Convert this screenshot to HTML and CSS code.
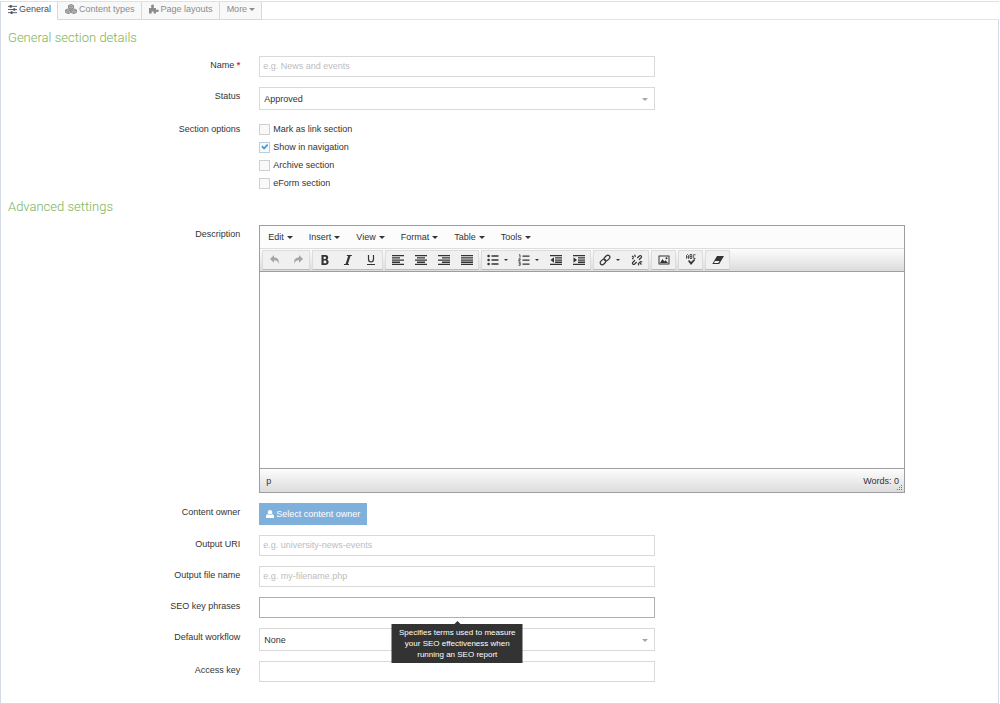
FILE: index.html
```html
<!DOCTYPE html>
<html lang="en">
  <head>
    <meta charset="utf-8">
    <title>General section details</title>
    <link rel="stylesheet" href="styles.css">
  </head>
  <body>
    <nav class="tabs">
      <a class="tab tab-active" href="#general">
        <svg class="icon" viewBox="0 0 10 10" width="9" height="9"><path d="M0 1.5h10M0 5h10M0 8.5h10" stroke="currentColor" stroke-width="1"/><path d="M3 0v3M7 3.5v3M4 7v3" stroke="currentColor" stroke-width="2"/></svg>
        General
      </a>
      <a class="tab" href="#types">
        <svg class="icon" viewBox="0 0 12 10" width="12" height="10"><path d="M6 .5L8.5 1.5V4L6 5.2 3.500 4V1.500zM3.200 4.800L5.800 6v2.500L3.200 9.600.600 8.500V6zM8.800 4.800L11.400 6v2.500L8.800 9.600 6.200 8.500V6z" fill="#bbb" stroke="currentColor" stroke-width="1"/><path d="M3.500 1.500L6 2.600l2.500-1.100M.6 6l2.600 1.100L5.800 6M6.200 6l2.600 1.100L11.400 6M6 2.600v2.600M3.200 7.100v2.500M8.800 7.100v2.500" fill="none" stroke="currentColor" stroke-width=".8"/></svg>
        Content types
      </a>
      <a class="tab" href="#layouts">
        <svg class="icon" viewBox="0 0 10 10" width="10" height="10"><path d="M0 4h2.600C1.500 2.500 2 .6 3.500.6S5.500 2.500 4.500 4H7v2c1-.9 2.800-.6 2.800.8S8 8.500 7 7.600V9.500H4.600V7.600H2.700v1.900H0z" fill="currentColor"/></svg>
        Page layouts
      </a>
      <a class="tab" href="#more">More <span class="caret"></span></a>
    </nav>

    <form class="panel">
      <h2 class="heading">General section details</h2>
      <div class="row">
        <label class="label" for="name">Name <span class="required">*</span></label>
        <input class="input" id="name" type="text" placeholder="e.g. News and events">
      </div>
      <div class="row">
        <label class="label" for="status">Status</label>
        <div class="select">
          <select id="status"><option>Approved</option></select>
        </div>
      </div>
      <div class="row" role="group" aria-labelledby="options">
        <span class="label" id="options">Section options</span>
        <div class="options">
          <label class="option"><input type="checkbox">Mark as link section</label>
          <label class="option"><input type="checkbox" checked>Show in navigation</label>
          <label class="option"><input type="checkbox">Archive section</label>
          <label class="option"><input type="checkbox">eForm section</label>
        </div>
      </div>

      <h2 class="heading heading-advanced">Advanced settings</h2>
      <div class="row">
        <label class="label" for="description">Description</label>
        <div class="editor">
          <div class="menubar">
            <button class="menu" type="button">Edit <span class="caret"></span></button>
            <button class="menu" type="button">Insert <span class="caret"></span></button>
            <button class="menu" type="button">View <span class="caret"></span></button>
            <button class="menu" type="button">Format <span class="caret"></span></button>
            <button class="menu" type="button">Table <span class="caret"></span></button>
            <button class="menu" type="button">Tools <span class="caret"></span></button>
          </div>
          <div class="toolbar">
            <div class="group">
              <button class="tool" type="button" aria-label="Undo" disabled><svg viewBox="0 0 12 12"><path d="M5 1v2.500c4 0 5.500 2.500 4.500 6.500C9.300 7.500 8 6.200 5 6.200V8.700L1 4.900z"/></svg></button>
              <button class="tool" type="button" aria-label="Redo" disabled><svg viewBox="0 0 12 12"><path d="M7 1v2.500C3 3.500 1.500 6 2.500 10 2.700 7.500 4 6.200 7 6.200V8.700l4-3.800z"/></svg></button>
            </div>
            <div class="group">
              <button class="tool" type="button" aria-label="Bold"><svg viewBox="0 0 12 12"><path fill-rule="evenodd" d="M2.500 1h4c3.300 0 3.400 3.800 1.500 4.600 2.500.8 2.200 5.400-1.500 5.400h-4zM4.600 2.700v2.200h1.500c1.400 0 1.400-2.200 0-2.200zm0 3.800v2.800h1.700c1.600 0 1.600-2.800 0-2.800z"/></svg></button>
              <button class="tool" type="button" aria-label="Italic"><svg viewBox="0 0 12 12"><path d="M5 1h5l-.3 1H8.500L5.900 10h1.200l-.3 1h-5l.3-1h1.500L6.200 2H4.700z"/></svg></button>
              <button class="tool" type="button" aria-label="Underline"><svg viewBox="0 0 12 12"><path class="line" d="M3.500 1v4c0 4 5 4 5 0V1M2 10.500h8"/></svg></button>
            </div>
            <div class="group">
              <button class="tool" type="button" aria-label="Align left"><svg viewBox="0 0 12 12"><path d="M0 1h12v1.300H0zM0 3.200h8v1.300H0zM0 5.400h12v1.300H0zM0 7.600h8v1.300H0zM0 9.800h12v1.300H0z"/></svg></button>
              <button class="tool" type="button" aria-label="Align center"><svg viewBox="0 0 12 12"><path d="M0 1h12v1.300H0zM2 3.200h8v1.300H2zM0 5.400h12v1.300H0zM2 7.600h8v1.300H2zM0 9.800h12v1.300H0z"/></svg></button>
              <button class="tool" type="button" aria-label="Align right"><svg viewBox="0 0 12 12"><path d="M0 1h12v1.300H0zM4 3.200h8v1.300H4zM0 5.400h12v1.300H0zM4 7.600h8v1.300H4zM0 9.800h12v1.300H0z"/></svg></button>
              <button class="tool" type="button" aria-label="Justify"><svg viewBox="0 0 12 12"><path d="M0 1h12v1.300H0zM0 3.200h12v1.300H0zM0 5.400h12v1.300H0zM0 7.600h12v1.300H0zM0 9.800h12v1.300H0z"/></svg></button>
            </div>
            <div class="group">
              <button class="tool tool-split" type="button" aria-label="Bullet list"><svg viewBox="0 0 12 12"><path d="M4.500 1.200h7v1.500h-7zM4.500 5.200h7v1.500h-7zM4.500 9.200h7v1.500h-7z"/><circle cx="1.600" cy="2" r="1.300"/><circle cx="1.600" cy="6" r="1.300"/><circle cx="1.600" cy="10" r="1.300"/></svg><span class="caret"></span></button>
              <button class="tool tool-split" type="button" aria-label="Numbered list"><svg viewBox="0 0 12 12"><path d="M4.500 1.500h7v1.200h-7zM4.500 5.500h7v1.200h-7zM4.500 9.500h7v1.200h-7z"/><path class="thin" d="M1 .8h1v3M.6 4.800h1.600v1.100H.8v1.200h1.600M.6 8.300h1.600v3H.6M.8 9.800h1.400"/></svg><span class="caret"></span></button>
              <button class="tool" type="button" aria-label="Decrease indent"><svg viewBox="0 0 12 12"><path d="M0 1h12v1.300H0zM5 3.200h7v1.300H5zM5 5.400h7v1.300H5zM5 7.600h7v1.300H5zM0 9.800h12v1.300H0zM4 3.300v5.400L.5 6z"/></svg></button>
              <button class="tool" type="button" aria-label="Increase indent"><svg viewBox="0 0 12 12"><path d="M0 1h12v1.300H0zM5 3.200h7v1.300H5zM5 5.400h7v1.300H5zM5 7.600h7v1.300H5zM0 9.800h12v1.300H0zM.5 3.300v5.400L4 6z"/></svg></button>
            </div>
            <div class="group">
              <button class="tool tool-split" type="button" aria-label="Insert link"><svg viewBox="0 0 12 12"><g transform="rotate(-45 6 6)"><rect class="line" x="0" y="4" width="6.500" height="4" rx="2"/><rect class="line" x="5.500" y="4" width="6.500" height="4" rx="2"/></g></svg><span class="caret"></span></button>
              <button class="tool" type="button" aria-label="Remove link"><svg viewBox="0 0 12 12"><path class="line" d="M6.300 4l2-2c1.500-1.200 3 .5 1.800 1.800L8 5.700M5.700 8l-2 2C2.200 11.200.700 9.500 1.900 8.200L4 6.300M1 2l2 1.500M3.500.7l1 2M8 8l2.500 2.500M9 7.500l2.300.500M7.200 9l.500 2.300M1 4.700h1.500"/></svg></button>
            </div>
            <div class="group">
              <button class="tool" type="button" aria-label="Insert image"><svg viewBox="0 0 12 12"><path fill-rule="evenodd" d="M.5 1.500h11v9H.5zm1 1v7h9v-7z"/><path d="M2 9l2.500-4L6.300 7.500 7.500 6.200 10 9z"/><circle cx="8.500" cy="4.200" r="1"/></svg></button>
            </div>
            <div class="group">
              <button class="tool" type="button" aria-label="Spellcheck"><svg viewBox="0 0 12 12"><path class="thin" d="M1.500 4.800V1.500l1-1 1 1v3.300M1.500 3h2M5 .5v4h1.800V.5H5M5 2.500h1.800M10.500.7H8.700v3.800h1.800"/><path d="M3 7l1.200-1L6 8l3.200-3 1 1L6 11z"/></svg></button>
            </div>
            <div class="group">
              <button class="tool" type="button" aria-label="Clear formatting"><svg viewBox="0 0 12 12"><path d="M5 2h7L7.200 10H.3zM3 7L1.800 9h4.500l1.200-2z" fill-rule="evenodd"/></svg></button>
            </div>
          </div>
          <textarea class="content" id="description"></textarea>
          <div class="statusbar">
            <span>p</span>
            <span>Words: 0</span>
            <svg class="resize" viewBox="0 0 6 6" width="6" height="6"><path d="M4 0h1v1H4zM2 2h1v1H2zM4 2h1v1H4zM0 4h1v1H0zM2 4h1v1H2zM4 4h1v1H4z" fill="#777"/></svg>
          </div>
        </div>
      </div>
      <div class="row">
        <label class="label" for="owner">Content owner</label>
        <button class="owner-btn" id="owner" type="button">
          <svg viewBox="0 0 8 8" width="8" height="8"><circle cx="4" cy="2.200" r="2.200" fill="#fff"/><path d="M0 8V6.300C0 4.800 1 4.200 2 4.200c1.200 1 2.800 1 4 0 1 0 2 .6 2 2.100V8z" fill="#fff"/></svg>
          Select content owner
        </button>
      </div>
      <div class="row">
        <label class="label" for="uri">Output URI</label>
        <input class="input" id="uri" type="text" placeholder="e.g. university-news-events">
      </div>
      <div class="row">
        <label class="label" for="file">Output file name</label>
        <input class="input" id="file" type="text" placeholder="e.g. my-filename.php">
      </div>
      <div class="row">
        <label class="label" for="seo">SEO key phrases</label>
        <div class="field">
          <input class="input input-hover" id="seo" type="text" aria-describedby="seo-tip">
          <div class="tooltip" id="seo-tip" role="tooltip">Specifies terms used to measure your SEO effectiveness when running an SEO report</div>
        </div>
      </div>
      <div class="row">
        <label class="label" for="workflow">Default workflow</label>
        <div class="select">
          <select id="workflow"><option>None</option></select>
        </div>
      </div>
      <div class="row">
        <label class="label" for="access">Access key</label>
        <input class="input" id="access" type="text">
      </div>
    </form>
  </body>
</html>
```
FILE: styles.css
```css
* {
  box-sizing: border-box;
}
body {
  margin: 0;
  padding: 1px 1px 0 0;
  background: #fff;
  color: #333;
  font-family: "Liberation Sans", Arial, sans-serif;
  font-size: 9px;
}
button,
input,
select,
textarea {
  font: inherit;
  color: inherit;
}

/* tabs */
.tabs {
  display: flex;
  height: 19px;
  border-top: 1px solid #dfe1e8;
  border-left: 1px solid #d3d9e5;
}
.tab {
  display: flex;
  align-items: center;
  gap: 2px;
  padding: 0 6px 3px 7px;
  border-right: 1px solid #d3d9e5;
  border-bottom: 1px solid #d3d9e5;
  background: #f8f8f8;
  color: #8c8c8c;
  text-decoration: none;
}
.tab-active {
  background: #fff;
  border-bottom-color: #fff;
  color: #46505e;
}
.tabs::after {
  content: "";
  flex: 1;
  border-bottom: 1px solid #dfe5ee;
}
.caret {
  border: 3px solid transparent;
  border-top-color: currentColor;
  border-bottom: 0;
}

/* form */
.panel {
  display: flex;
  flex-direction: column;
  gap: 10px;
  padding: 8px 0 21px;
  border: 1px solid #d3d9e5;
  border-top: 0;
}
.heading {
  margin: 0 0 -2px 7px;
  color: #7db358;
  font-family: Roboto, sans-serif;
  font-size: 13px;
  font-weight: 300;
  line-height: 20px;
}
.heading-advanced {
  margin-top: -5px;
}
.row {
  display: grid;
  grid-template-columns: 24% 1fr;
  column-gap: 19px;
  align-items: start;
}
.label {
  text-align: right;
  line-height: 18px;
}
.required {
  color: #d9342b;
  font-weight: bold;
}
.input,
.select,
.field {
  width: 396px;
  max-width: 100%;
}
.input {
  height: 21px;
  padding: 0 3px 2px;
  border: 1px solid #d9d9d9;
  outline: none;
  background: #fff;
}
.input::placeholder {
  color: #bdbdbd;
}
.input-hover {
  border-color: #b0b0b0;
}
.field {
  position: relative;
  display: flex;
}
.select {
  position: relative;
}
.select select {
  display: block;
  width: 100%;
  height: 23px;
  padding: 0 4px;
  border: 1px solid #d9d9d9;
  background: #fff;
  appearance: none;
}
.select::after {
  content: "";
  position: absolute;
  top: 11px;
  right: 7px;
  border: 3px solid transparent;
  border-top-color: #a5a5a5;
  border-bottom: 0;
  pointer-events: none;
}
.option {
  display: flex;
  align-items: center;
  gap: 3px;
  height: 18px;
}
.option input {
  display: flex;
  align-items: center;
  justify-content: center;
  width: 11px;
  height: 11px;
  margin: 0;
  border: 1px solid #d0d0d0;
  background: #f9f9f9;
  appearance: none;
}
.option input:checked {
  border-color: #b9cde0;
}
.option input:checked::before {
  content: "";
  width: 7px;
  height: 7px;
  background: #3f9bd3;
  clip-path: polygon(0 45%, 18% 30%, 40% 52%, 82% 8%, 100% 25%, 40% 90%);
}
.owner-btn {
  display: flex;
  align-items: center;
  justify-self: start;
  gap: 2px;
  height: 22px;
  padding: 0 7px;
  border: 0;
  background: #7fb0dc;
  color: #fff;
}
.tooltip {
  position: absolute;
  top: 27px;
  left: 50%;
  z-index: 1;
  width: 131px;
  padding: 3px 6px;
  background: #333;
  color: #fff;
  font-size: 8px;
  line-height: 11px;
  text-align: center;
  transform: translateX(-50%);
}
.tooltip::before {
  content: "";
  position: absolute;
  top: -3px;
  left: 50%;
  margin-left: -3px;
  border: 3px solid transparent;
  border-bottom-color: #333;
  border-top: 0;
}

/* editor */
.editor {
  margin-right: 93px;
  border: 1px solid #9e9e9e;
}
.menubar {
  display: flex;
  height: 22px;
  background: #fcfcfc;
}
.menu {
  display: flex;
  align-items: center;
  gap: 3px;
  padding: 0 8px;
  border: 0;
  background: none;
}
.toolbar {
  display: flex;
  align-items: flex-start;
  gap: 2px;
  height: 24px;
  padding: 1px 2px;
  border-top: 1px solid #ddd;
  border-bottom: 1px solid #9e9e9e;
  background: linear-gradient(#fdfdfd, #dcdcdc);
}
.group {
  display: flex;
  height: 20px;
  border: 1px solid #dcdcdc;
  border-bottom-color: #bbb;
  border-radius: 1px;
  background: #f0f0f0;
}
.tool {
  display: flex;
  align-items: center;
  justify-content: center;
  width: 23px;
  padding: 0;
  border: 0;
  background: none;
}
.tool:disabled {
  color: #a5a5a5;
}
.tool-split {
  width: 31px;
  gap: 5px;
}
.tool svg {
  width: 12px;
  height: 12px;
  fill: currentColor;
}
.tool .caret {
  border-width: 2px;
  border-bottom: 0;
}
.tool .line,
.tool .thin {
  fill: none;
  stroke: currentColor;
  stroke-width: 1.2;
}
.tool .thin {
  stroke-width: .8;
}
.content {
  display: block;
  width: 100%;
  height: 196px;
  border: 0;
  outline: none;
  resize: none;
}
.statusbar {
  position: relative;
  display: flex;
  align-items: center;
  justify-content: space-between;
  height: 24px;
  padding: 0 5px 0 6px;
  border-top: 1px solid #9e9e9e;
  background: linear-gradient(#fdfdfd, #dcdcdc);
}
.resize {
  position: absolute;
  right: 1px;
  bottom: 1px;
}
```
